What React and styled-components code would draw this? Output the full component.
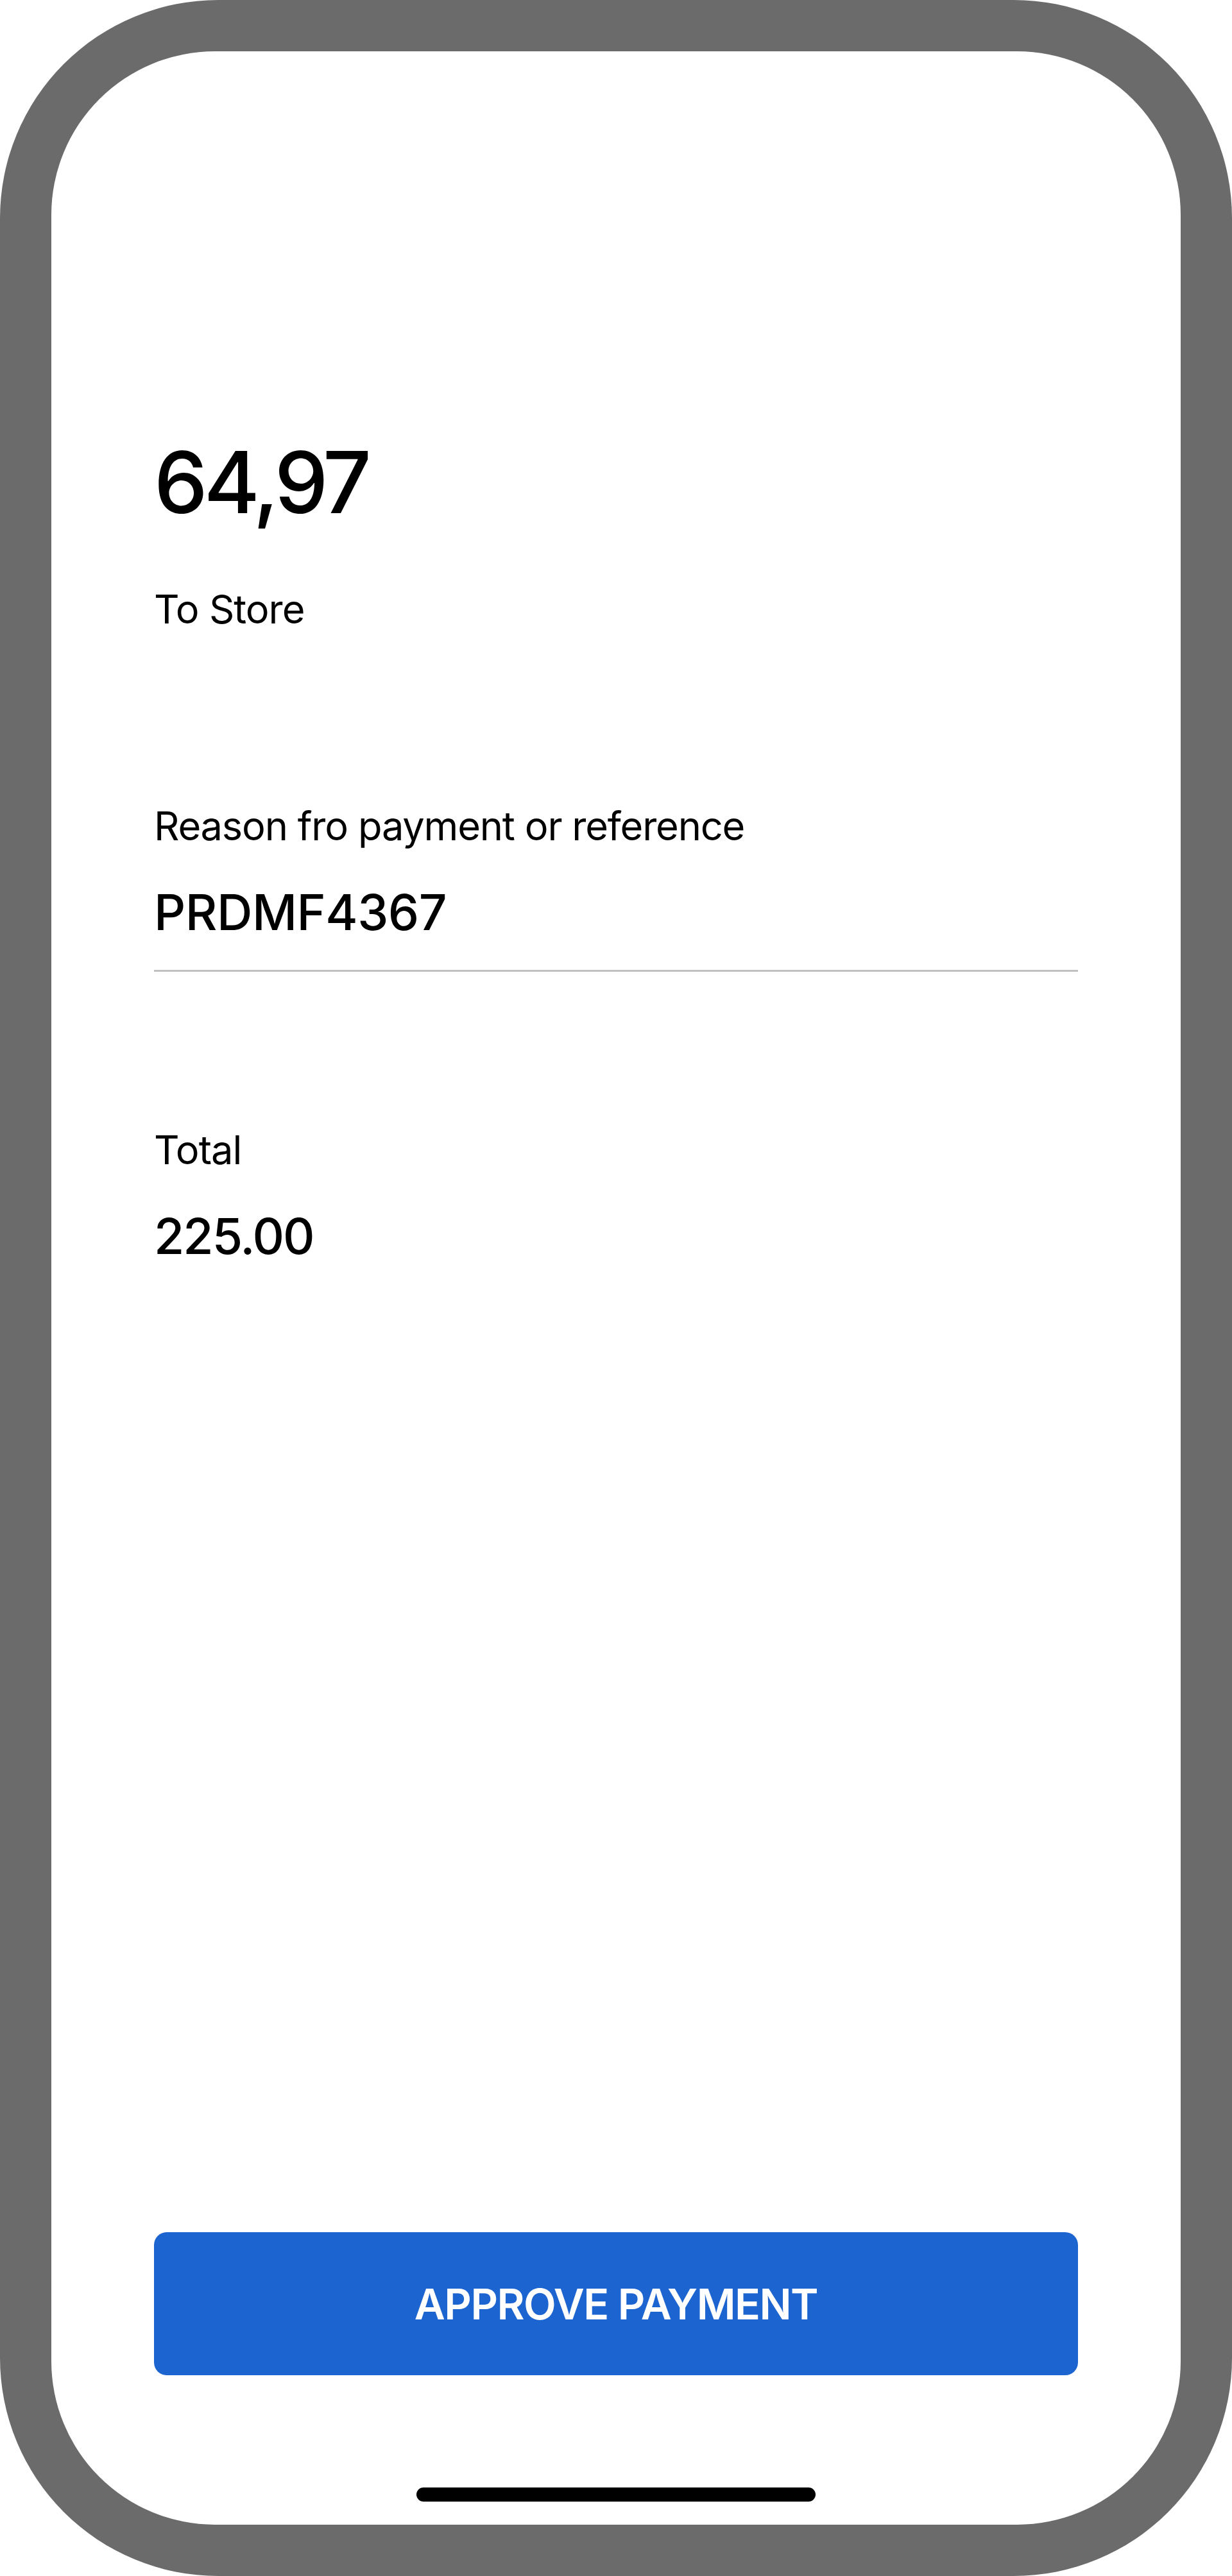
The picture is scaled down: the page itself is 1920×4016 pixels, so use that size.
import React from "react";
import styled, { createGlobalStyle } from "styled-components";

const GlobalStyle = createGlobalStyle`
  html, body {
    margin: 0;
    padding: 0;
    background: #ffffff;
  }
  body {
    font-family: "Inter", "Noto Sans", "Liberation Sans", sans-serif;
    color: #000000;
  }
  * { box-sizing: border-box; }
`;

const Page = styled.div`
  width: 1920px;
  height: 4016px;
  background: #ffffff;
`;

const Device = styled.div`
  width: 100%;
  height: 100%;
  background: #6b6b6b;
  border-radius: 340px;
  padding: 80px;
  display: flex;
`;

const Screen = styled.main`
  flex: 1;
  background: #ffffff;
  border-radius: 255px;
  display: flex;
  flex-direction: column;
  padding: 592px 160px 36px;
`;

const Text = styled.div`
  font-size: ${(p) => p.$size}px;
  font-weight: ${(p) => p.$weight || 400};
  line-height: 1.2;
  margin-top: ${(p) => p.$gap || 0}px;
  letter-spacing: ${(p) => p.$spacing || 0}px;
  white-space: nowrap;
`;

const Field = styled.div`
  margin-top: 265px;
  padding-bottom: 43px;
  border-bottom: 3px solid #c0c0c0;
`;

const Footer = styled.footer`
  margin-top: auto;
  display: flex;
  flex-direction: column;
  align-items: center;
`;

const ApproveButton = styled.button`
  width: 100%;
  height: 223px;
  border: none;
  border-radius: 20px;
  background: #1c64d0;
  color: #ffffff;
  font-family: inherit;
  font-size: 66px;
  font-weight: 600;
  letter-spacing: -1.5px;
  cursor: pointer;
`;

const HomeIndicator = styled.div`
  width: 622px;
  height: 22px;
  border-radius: 11px;
  background: #000000;
  margin-top: 175px;
`;

export default function App() {
  return (
    <Page>
      <GlobalStyle />
      <Device>
        <Screen>
          <Text $size={133} $weight={500} $spacing={-6}>64,97</Text>
          <Text $size={61.4} $gap={82} $spacing={-1}>To Store</Text>

          <Field>
            <Text $size={61.4} $spacing={-1.2}>Reason fro payment or reference</Text>
            <Text $size={76.8} $weight={500} $gap={51} $spacing={-0.5}>PRDMF4367</Text>
          </Field>

          <Text $size={61.4} $gap={242} $spacing={-1}>Total</Text>
          <Text $size={76.8} $weight={500} $gap={51} $spacing={-2}>225.00</Text>

          <Footer>
            <ApproveButton type="button">APPROVE PAYMENT</ApproveButton>
            <HomeIndicator />
          </Footer>
        </Screen>
      </Device>
    </Page>
  );
}
